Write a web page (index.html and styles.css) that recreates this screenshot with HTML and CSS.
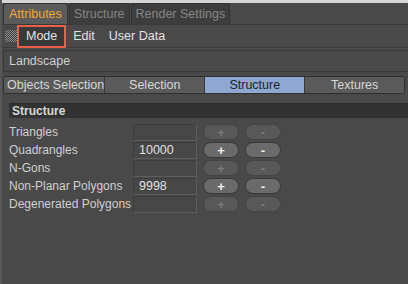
FILE: index.html
```html
<!DOCTYPE html>
<html lang="en">
<head>
  <meta charset="UTF-8" />
  <title>Attributes</title>
  <link rel="stylesheet" href="styles.css">
</head>
<body>
  <div class="top-strip"></div>
  <div class="tabs">
    <div class="tab active">Attributes</div>
    <div class="tab">Structure</div>
    <div class="tab">Render Settings</div>
  </div>
  <div class="menu">
    <span class="grip"></span>
    <span class="menu-item current">Mode</span>
    <span class="menu-item">Edit</span>
    <span class="menu-item">User Data</span>
  </div>
  <main class="panel">
    <div class="name-field">Landscape</div>
    <div class="segments">
      <div class="seg">Objects Selection</div>
      <div class="seg">Selection</div>
      <div class="seg on">Structure</div>
      <div class="seg">Textures</div>
    </div>
    <div class="section-head">Structure</div>
    <div class="rows">
      <div class="row">
        <span class="label">Triangles</span>
        <span class="num"></span>
        <button class="btn" disabled>+</button>
        <button class="btn" disabled>-</button>
      </div>
      <div class="row">
        <span class="label">Quadrangles</span>
        <span class="num">10000</span>
        <button class="btn">+</button>
        <button class="btn">-</button>
      </div>
      <div class="row">
        <span class="label">N-Gons</span>
        <span class="num"></span>
        <button class="btn" disabled>+</button>
        <button class="btn" disabled>-</button>
      </div>
      <div class="row">
        <span class="label">Non-Planar Polygons</span>
        <span class="num">9998</span>
        <button class="btn">+</button>
        <button class="btn">-</button>
      </div>
      <div class="row">
        <span class="label">Degenerated Polygons</span>
        <span class="num"></span>
        <button class="btn" disabled>+</button>
        <button class="btn" disabled>-</button>
      </div>
    </div>
  </main>
</body>
</html>
```

FILE: styles.css
```css
* {
  box-sizing: border-box;
  margin: 0;
  padding: 0;
}
body {
  background-color: #494949;
  font-family: 'Liberation Sans', Arial, sans-serif;
  font-size: 12px;
  color: #d2d2d2;
  width: 408px;
  height: 284px;
  overflow: hidden;
  border-left: 2px solid #575757;
  white-space: nowrap;
}
.top-strip {
  height: 3px;
  background-color: #d6d6d6;
  margin-left: -2px;
}
.tabs {
  display: flex;
  height: 22px;
  padding-left: 1px;
  border-bottom: 1px solid #3a3a3a;
}
.tab {
  padding: 0 4px;
  line-height: 21px;
  font-size: 12.5px;
  background-color: #3d3d3d;
  color: #858585;
  border: 1px solid #333;
  border-bottom: none;
  border-radius: 3px 3px 0 0;
  margin-right: 1px;
}
.tab.active {
  padding: 0 5px;
  background-color: #5b5b5b;
  color: #f3a535;
}
.menu {
  display: flex;
  align-items: center;
  height: 23px;
  padding-left: 3px;
  border-bottom: 1px solid #3c3c3c;
}
.grip {
  width: 12px;
  height: 12px;
  background: repeating-conic-gradient(#8c8c8c 0 25%, #3e3e3e 0 50%);
  background-size: 2px 2px;
}
.menu-item {
  padding: 0 5px;
  line-height: 22px;
  font-size: 12.5px;
  color: #e2e2e2;
}
.menu-item.current {
  height: 23px;
  padding: 0 7px;
  line-height: 19px;
  background-color: #393939;
  border: 2px solid #e8604c;
  margin: 0 2px 0 0;
}
.menu-item:last-child {
  margin-left: 4px;
}
.panel {
  padding: 2px 0 0 1px;
}
.name-field {
  height: 22px;
  line-height: 20px;
  padding-left: 5px;
  border: 1px solid #3a3a3a;
  border-right: none;
  color: #d0d0d0;
  font-size: 12.5px;
}
.segments {
  display: flex;
  margin: 4px 3px 0 0;
  height: 18px;
  border: 1px solid #2f2f2f;
  border-radius: 3px;
  overflow: hidden;
}
.seg {
  flex: 0 0 100px;
  line-height: 16px;
  text-align: center;
  background-color: #5a5a5a;
  color: #d6d6d6;
  font-size: 12.5px;
  border-right: 1px solid #3a3a3a;
}
.seg:first-child {
  text-align: left;
  padding-left: 3px;
}
.seg:last-child {
  flex: 1;
  border-right: none;
}
.seg.on {
  background-color: #8ea8d2;
  color: #1c2330;
}
.section-head {
  margin: 9px 0 0 6px;
  height: 15px;
  line-height: 15px;
  padding-left: 3px;
  background-color: #323232;
  font-weight: bold;
  color: #d8d8d8;
  border-top: 1px solid #2c2c2c;
}
.rows {
  padding-top: 5px;
}
.row {
  display: flex;
  align-items: center;
  height: 18px;
}
.label {
  flex: 0 0 130px;
  padding-left: 6px;
  color: #d0d0d0;
  font-size: 12px;
}
.num {
  flex: 0 0 64px;
  height: 17px;
  line-height: 15px;
  padding-left: 5px;
  border: 1px solid #5d5d5d;
  border-top-color: #3c3c3c;
  border-left-color: #3c3c3c;
  background-color: #474747;
  color: #e0e0e0;
  font-size: 12.5px;
}
.btn {
  flex: 0 0 36px;
  height: 16px;
  margin-left: 6px;
  border-radius: 8px;
  border: 1px solid #3a3a3a;
  background-color: #6a6a6a;
  color: #f2f2f2;
  font-family: 'Liberation Sans', Arial, sans-serif;
  font-size: 13px;
  font-weight: bold;
  line-height: 13px;
}
.btn:disabled {
  background-color: #585858;
  border-color: #444;
  color: #7c7c7c;
}
```
